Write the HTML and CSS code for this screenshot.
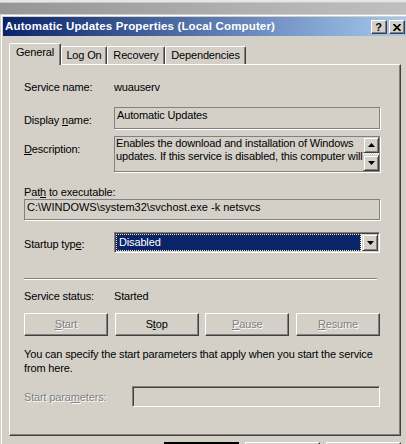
FILE: index.html
```html
<!DOCTYPE html>
<html>
<head>
<meta charset="utf-8">
<title>Automatic Updates Properties</title>
<link rel="stylesheet" href="styles.css">
</head>
<body>
<div class="backdrop"></div>
<div class="window">
  <div class="titlebar">
    <span class="title">Automatic Updates Properties (Local Computer)</span>
    <div class="caption-buttons">
      <span class="cap-btn help">?</span>
      <span class="cap-btn close">
        <svg width="8" height="7" viewBox="0 0 8 7"><path d="M0.5 0 L7.5 7 M7.5 0 L0.5 7" stroke="#000" stroke-width="1.7" fill="none"/></svg>
      </span>
    </div>
  </div>
  <div class="client">
    <div class="tabs">
      <div class="tab active tab-general">General</div>
      <div class="tab tab-logon">Log On</div>
      <div class="tab tab-recovery">Recovery</div>
      <div class="tab tab-deps">Dependencies</div>
    </div>
    <div class="panel">
      <div class="row row-service">
        <span class="label">Service name:</span>
        <span class="value">wuauserv</span>
      </div>
      <div class="row row-display">
        <span class="label label-box">Display <u>n</u>ame:</span>
        <div class="edit edit-static">Automatic Updates</div>
      </div>
      <div class="row row-desc">
        <span class="label label-box"><u>D</u>escription:</span>
        <div class="edit edit-static edit-desc">
          <div class="desc-text">Enables the download and installation of Windows<br>updates. If this service is disabled, this computer will</div>
          <div class="scrollbar">
            <span class="sb-btn"><svg width="7" height="4" viewBox="0 0 7 4"><path d="M3.5 0 L7 4 L0 4 Z" fill="#000"/></svg></span>
            <span class="sb-track"></span>
            <span class="sb-btn"><svg width="7" height="4" viewBox="0 0 7 4"><path d="M0 0 L7 0 L3.5 4 Z" fill="#000"/></svg></span>
          </div>
        </div>
      </div>
      <div class="row-path-label">Pat<u>h</u> to executable:</div>
      <div class="edit edit-static edit-path">C:\WINDOWS\system32\svchost.exe -k netsvcs</div>
      <div class="row row-startup">
        <span class="label label-combo">Startup typ<u>e</u>:</span>
        <div class="combo">
          <span class="combo-sel">Disabled</span>
          <span class="combo-btn"><svg width="7" height="4" viewBox="0 0 7 4"><path d="M0 0 L7 0 L3.5 4 Z" fill="#000"/></svg></span>
        </div>
      </div>
      <div class="separator"></div>
      <div class="row row-status">
        <span class="label">Service status:</span>
        <span class="value">Started</span>
      </div>
      <div class="svc-buttons">
        <span class="btn disabled"><u>S</u>tart</span>
        <span class="btn">S<u>t</u>op</span>
        <span class="btn disabled"><u>P</u>ause</span>
        <span class="btn disabled"><u>R</u>esume</span>
      </div>
      <p class="hint">You can specify the start parameters that apply when you start the service<br>from here.</p>
      <div class="row row-params">
        <span class="label label-params disabled-text">Start para<u>m</u>eters:</span>
        <div class="edit-sunken"></div>
      </div>
    </div>
    <div class="dialog-buttons">
      <span class="btn dbtn default">OK</span>
      <span class="btn dbtn">Cancel</span>
      <span class="btn dbtn">Apply</span>
    </div>
  </div>
</div>
</body>
</html>
```

FILE: styles.css
```css
html, body {
  margin: 0;
  padding: 0;
}

body {
  width: 406px;
  height: 444px;
  overflow: hidden;
  background: #d4d0c8;
  font-family: "Liberation Sans", Arial, sans-serif;
  font-size: 11px;
  letter-spacing: -0.15px;
  color: #000;
}

u {
  text-decoration: underline;
  text-underline-offset: 1px;
}

.backdrop {
  height: 14px;
  background:
    linear-gradient(to bottom, #e6e6e6 0, #e6e6e6 2px, #c8c8c8 2px, #c8c8c8 3px, transparent 3px),
    linear-gradient(to right, #969696 0, #9e9e9e 20%, #a7a7a7 40%, #b0b0b0 60%, #b8b8b8 80%, #bfbfbf 100%);
}

.window {
  width: 410px;
  box-sizing: border-box;
  border-top: 1px solid #d4d0c8;
  border-left: 1px solid #d4d0c8;
  padding: 2px 0 0 2px;
  box-shadow: inset 1px 1px 0 #fff;
  background: #d4d0c8;
}

.titlebar {
  height: 19px;
  display: flex;
  align-items: flex-start;
  justify-content: space-between;
  background: linear-gradient(to right, #0a246a 0%, #a6caf0 100%);
  padding: 0 2px 0 2px;
  width: 404px;
  box-sizing: border-box;
}

.title {
  color: #fff;
  font-weight: bold;
  font-size: 11.5px;
  line-height: 19px;
  white-space: nowrap;
  letter-spacing: 0.15px;
}

.caption-buttons {
  display: flex;
  gap: 2px;
  padding-top: 3px;
}

.cap-btn {
  width: 16px;
  height: 14px;
  box-sizing: border-box;
  background: #d4d0c8;
  border-top: 1px solid #fff;
  border-left: 1px solid #fff;
  border-right: 1px solid #404040;
  border-bottom: 1px solid #404040;
  box-shadow: inset -1px -1px 0 #808080;
  display: flex;
  align-items: center;
  justify-content: center;
}

.help {
  font-weight: bold;
  font-size: 11px;
  line-height: 12px;
  padding-right: 1px;
  letter-spacing: 0;
}

.close svg {
  display: block;
  margin-right: 1px;
}

.client {
  width: 404px;
  padding-top: 7px;
}

.tabs {
  display: flex;
  align-items: flex-end;
  height: 21px;
  padding-left: 6px;
}

.tab {
  box-sizing: border-box;
  height: 18px;
  border-top: 1px solid #fff;
  border-left: 1px solid #fff;
  border-right: 1px solid #404040;
  box-shadow: inset -1px 0 0 #808080;
  border-radius: 2px 2px 0 0;
  text-align: center;
  line-height: 17px;
  white-space: nowrap;
  background: #d4d0c8;
}

.tab.active {
  height: 22px;
  margin-bottom: -1px;
  position: relative;
  z-index: 1;
  line-height: 17px;
}

.tab-general { width: 52px; }
.tab-logon { width: 46px; }
.tab-recovery { width: 58px; }
.tab-deps { width: 81px; }

.panel {
  width: 392px;
  height: 372px;
  box-sizing: border-box;
  border-top: 1px solid #fff;
  border-left: 1px solid #fff;
  border-right: 1px solid #404040;
  border-bottom: 1px solid #404040;
  box-shadow: inset -1px -1px 0 #808080;
  padding: 0 20px 0 14px;
  margin-left: 6px;
}

.row {
  display: flex;
  align-items: flex-start;
}

.label {
  width: 90px;
  flex: none;
  line-height: 13px;
  white-space: nowrap;
}

.value {
  line-height: 13px;
}

.row-service {
  margin-top: 16px;
  height: 13px;
}

.row-display {
  margin-top: 13px;
}

.label-box {
  padding-top: 7px;
}

.edit {
  box-sizing: border-box;
  line-height: 13px;
  white-space: nowrap;
  overflow: hidden;
}

.edit-static {
  border: 1px solid #808080;
  box-shadow: 1px 1px 0 #fff;
  padding: 1px 2px;
}

.row-display .edit {
  width: 266px;
  height: 22px;
}

.row-desc {
  margin-top: 7px;
}

.edit-desc {
  width: 266px;
  height: 36px;
  padding: 0 0 0 1px;
  display: flex;
  justify-content: space-between;
}

.desc-text {
  line-height: 13px;
  overflow: hidden;
}

.scrollbar {
  width: 16px;
  display: flex;
  flex-direction: column;
  flex: none;
}

.sb-btn, .combo-btn {
  box-sizing: border-box;
  width: 16px;
  height: 16px;
  background: #d4d0c8;
  border-top: 1px solid #d4d0c8;
  border-left: 1px solid #d4d0c8;
  border-right: 1px solid #404040;
  border-bottom: 1px solid #404040;
  box-shadow: inset 1px 1px 0 #fff, inset -1px -1px 0 #808080;
  display: flex;
  align-items: center;
  justify-content: center;
}

.sb-btn svg, .combo-btn svg {
  display: block;
}

.sb-track {
  height: 2px;
  background: repeating-conic-gradient(#fff 0 25%, #d4d0c8 0 50%) 0 0 / 2px 2px;
}

.row-path-label {
  margin-top: 14px;
  line-height: 13px;
}

.edit-path {
  width: 356px;
  height: 21px;
  letter-spacing: 0;
}

.row-startup {
  margin-top: 12px;
}

.label-combo {
  padding-top: 6px;
}

.combo {
  box-sizing: border-box;
  width: 266px;
  height: 21px;
  background: #fff;
  border-top: 1px solid #808080;
  border-left: 1px solid #808080;
  border-right: 1px solid #fff;
  border-bottom: 1px solid #fff;
  box-shadow: inset 1px 1px 0 #404040, inset -1px -1px 0 #d4d0c8;
  padding: 1px;
  display: flex;
  justify-content: space-between;
}

.combo-sel {
  flex: 1;
  margin-right: 1px;
  background: #0a246a;
  color: #fff;
  line-height: 15px;
  padding-left: 2px;
  border: 1px dotted #f3e6a0;
}

.combo-btn {
  height: 17px;
}

.separator {
  margin-top: 25px;
  width: 353px;
  height: 1px;
  background: #808080;
  border-bottom: 1px solid #fff;
}

.row-status {
  margin-top: 10px;
  height: 13px;
}

.svc-buttons {
  margin-top: 10px;
  display: flex;
  justify-content: space-between;
}

.btn {
  box-sizing: border-box;
  width: 84px;
  height: 23px;
  background: #d4d0c8;
  border-top: 1px solid #fff;
  border-left: 1px solid #fff;
  border-right: 1px solid #404040;
  border-bottom: 1px solid #404040;
  box-shadow: inset -1px -1px 0 #808080;
  display: flex;
  align-items: center;
  justify-content: center;
  line-height: 13px;
}

.btn.disabled, .disabled-text {
  color: #808080;
  text-shadow: 1px 1px 0 #fff;
}

.hint {
  margin: 11px 0 0 0;
  line-height: 14px;
  white-space: nowrap;
}

.row-params {
  margin-top: 11px;
}

.label-params {
  width: 108px;
  padding-top: 5px;
}

.edit-sunken {
  box-sizing: border-box;
  width: 248px;
  height: 21px;
  background: #d4d0c8;
  border-top: 1px solid #808080;
  border-left: 1px solid #808080;
  border-right: 1px solid #fff;
  border-bottom: 1px solid #fff;
  box-shadow: inset 1px 1px 0 #404040, inset -1px -1px 0 #d4d0c8;
}

.dialog-buttons {
  display: flex;
  justify-content: flex-end;
  gap: 6px;
  padding-right: 6px;
  margin-top: 6px;
}

.dbtn {
  width: 75px;
  padding-top: 8px;
}

.dbtn.default {
  border: 1px solid #000;
  box-shadow: inset 0 1px 0 #000, inset 1px 0 0 #fff, inset -1px -1px 0 #404040, inset -2px -2px 0 #808080;
}
```
